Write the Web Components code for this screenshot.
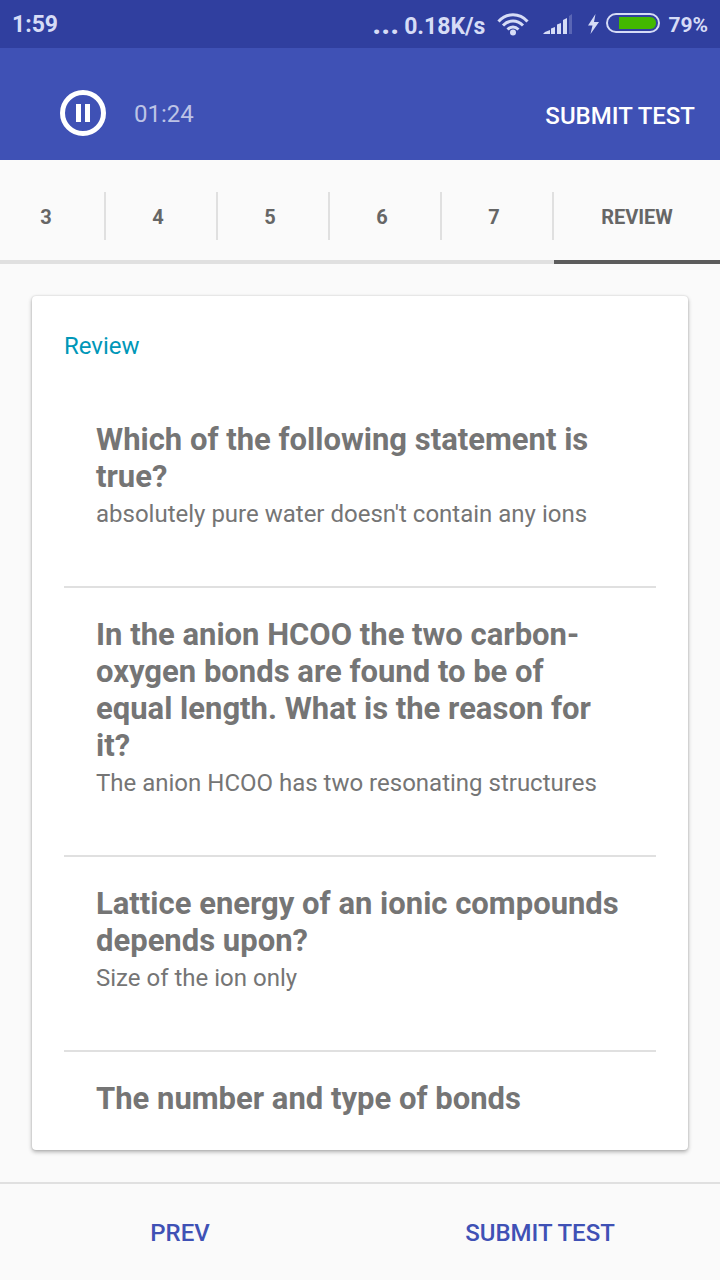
<!DOCTYPE html>
<html lang="en">
<head>
<meta charset="utf-8">
<meta name="viewport" content="width=device-width, initial-scale=1">
<title>Test review</title>
<style>
  body { margin: 0; background: #fafafa; font-family: Roboto, "Liberation Sans", sans-serif; }
</style>
</head>
<body>
<test-app></test-app>
<script>
const define = (name, html) => {
  const template = document.createElement('template');
  template.innerHTML = html;
  customElements.define(name, class extends HTMLElement {
    constructor() {
      super();
      this.attachShadow({ mode: 'open' }).append(template.content.cloneNode(true));
    }
  });
};

define('status-bar', `
<style>
  :host { display: flex; align-items: center; height: 48px; padding: 2px 12px 0; box-sizing: border-box;
    background: #303f9f; color: #d6dcf6; font-size: 23px; line-height: 32px; font-weight: 700; }
  .time { margin-right: auto; }
  .speed { display: flex; align-items: baseline; gap: 5px; height: 34px; }
  .dots { font-size: 31px; }
  svg { display: block; flex: none; fill: currentColor; }
  .wifi { margin-left: 12px; }
  .signal { margin-left: 14px; }
  .bolt { margin-left: 14px; }
  .battery { margin-left: 6px; }
  .level { margin-left: 8px; font-size: 21px; }
</style>
<span class="time">1:59</span>
<span class="speed"><span class="dots">...</span><span>0.18K/s</span></span>
<svg class="wifi" width="32" height="24" viewBox="0 0 32 24" aria-hidden="true">
  <g fill="none" stroke="currentColor" stroke-width="3">
    <path d="M1.500 8.500C9.500 -.5 22.500 -.5 30.500 8.500M6 12.500C12 6.500 20 6.500 26 12.500M10.500 16.500C14 13 18 13 21.500 16.500"/>
  </g>
  <circle cx="16" cy="19.500" r="3"/>
</svg>
<svg class="signal" width="30" height="24" viewBox="0 0 30 24" aria-hidden="true">
  <path d="M0 21L2 19L7 17V21ZM8 15.500L12 14V21H8ZM14 11.500L18 10V21H14ZM20 7L24 5V21H20Z"/>
  <path opacity=".25" d="M26 3L29 1V21H26Z"/>
</svg>
<svg class="bolt" width="13" height="24" viewBox="0 0 13 24" aria-hidden="true">
  <path d="M8.500 1L1 12.500H5.500L3.500 21L12 9H7Z"/>
</svg>
<svg class="battery" width="54" height="24" viewBox="0 0 54 24" aria-hidden="true">
  <rect x="1" y="1" width="52" height="18" rx="9" fill="none" stroke="currentColor" stroke-width="2"/>
  <path fill="#43b800" d="M13 4H44C52 4 52 16 44 16H13Z"/>
</svg>
<span class="level">79%</span>`);

define('test-header', `
<style>
  :host { display: flex; align-items: center; min-height: 112px; padding: 18px 25px 0 60px; box-sizing: border-box;
    background: #3f51b5; color: #fff; }
  button { border: 0; margin: 0; padding: 0; background: none; color: inherit; font: inherit; font-size: 24px; font-weight: 500; line-height: 28px; }
  svg { display: block; }
  time { margin: 2px auto 0 28px; font-size: 24px; line-height: 28px; color: #bcc3e6; }
  .submit { margin-top: 6px; }
</style>
<button aria-label="Pause"><svg width="46" height="46" viewBox="0 0 46 46" aria-hidden="true">
  <circle cx="23" cy="23" r="20.500" fill="none" stroke="#fff" stroke-width="5"/>
  <path fill="#fff" d="M16 14h5v18h-5zM25 14h5v18h-5z"/></svg></button>
<time>01:24</time>
<button class="submit">SUBMIT TEST</button>`);

define('question-tabs', `
<style>
  :host { display: flex; justify-content: flex-end; overflow: hidden; }
  ::slotted(question-tab) { flex: 1 0 112px; }
  ::slotted(question-tab[active]) { flex: 1 0 166px; }
</style>
<slot></slot>`);

define('question-tab', `
<style>
  :host { display: block; padding: 32px 0 20px; border-bottom: 4px solid #e0e0e0; box-sizing: border-box; }
  :host([active]) { border-color: #5c5c5c; }
  button { display: block; width: 100%; height: 48px; border: 0; border-right: 2px solid #e0e0e0; margin: 0; padding: 2px 6px 0 0;
    background: none; color: #666; font: inherit; font-size: 20px; font-weight: 700; line-height: 24px; text-align: center; }
  :host([active]) button { border: 0; padding-right: 0; }
</style>
<button><slot></slot></button>`);

define('review-card', `
<style>
  :host { display: block; box-sizing: border-box; padding: 32px; border-radius: 4px; background: #fff;
    box-shadow: 0 2px 4px rgba(0,0,0,.3), 0 0 2px rgba(0,0,0,.16); }
  h1 { margin: 0 0 29px; font-size: 24px; line-height: 36px; font-weight: 400; color: #0097b8; }
</style>
<h1>Review</h1>
<slot></slot>`);

define('review-item', `
<style>
  :host { display: block; padding: 28px 32px 52px; border-bottom: 2px solid #e0e0e0; color: #757575; }
  :host(:last-child) { padding-bottom: 0; border: 0; }
  h2 { margin: 0; font-size: 31px; line-height: 37px; font-weight: 700; }
  ::slotted(p) { margin: 0; font-size: 24px; line-height: 39px; }
</style>
<h2><slot name="question"></slot></h2>
<slot></slot>`);

define('test-footer', `
<style>
  :host { display: grid; grid-template-columns: 1fr 1fr; border-top: 2px solid #e0e0e0; }
  button { height: 96px; border: 0; margin: 0; padding: 2px 0 0; background: none; color: #3f51b5; font: inherit; font-size: 24px; font-weight: 500; }
</style>
<button>PREV</button><button>SUBMIT TEST</button>`);

define('test-app', `
<style>
  :host { display: flex; flex-direction: column; min-height: 100vh; background: #fafafa; }
  main { flex: 1; display: grid; padding: 32px; }
</style>
<status-bar></status-bar>
<test-header></test-header>
<question-tabs>
  <question-tab>3</question-tab><question-tab>4</question-tab><question-tab>5</question-tab>
  <question-tab>6</question-tab><question-tab>7</question-tab><question-tab active>REVIEW</question-tab>
</question-tabs>
<main>
  <review-card>
    <review-item><span slot="question">Which of the following statement is true?</span>
      <p>absolutely pure water doesn't contain any ions</p></review-item>
    <review-item><span slot="question">In the anion HCOO the two carbon-oxygen bonds are found to be of equal length. What is the reason for it?</span>
      <p>The anion HCOO has two resonating structures</p></review-item>
    <review-item><span slot="question">Lattice energy of an ionic compounds depends upon?</span>
      <p>Size of the ion only</p></review-item>
    <review-item><span slot="question">The number and type of bonds</span></review-item>
  </review-card>
</main>
<test-footer></test-footer>`);
</script>
</body>
</html>
